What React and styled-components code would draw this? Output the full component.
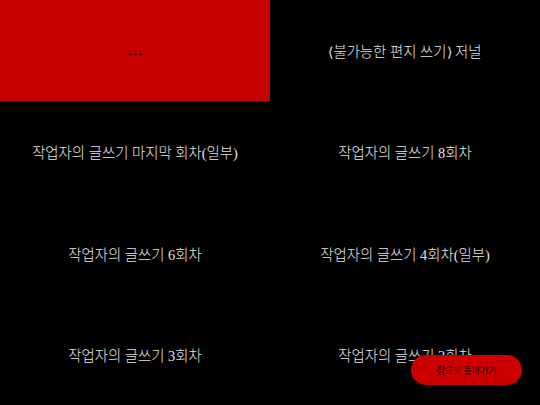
import React from "react";
import styled, { createGlobalStyle } from "styled-components";

const Global = createGlobalStyle`
  html, body { margin: 0; padding: 0; background: #000; }
  body { font-family: "Liberation Serif", "Noto Sans CJK KR", serif; }
`;

const Grid = styled.div`
  display: grid;
  grid-template-columns: 1fr 1fr;
  grid-template-rows: repeat(4, 101.25px);
  width: 540px;
  height: 405px;
  background: #000;
`;

const Cell = styled.a`
  display: flex;
  align-items: center;
  justify-content: center;
  padding-top: ${(p) => (p.$active ? "6px" : "0")};
  background: ${(p) => (p.$active ? "#c60000" : "#000")};
  color: ${(p) => (p.$active ? "#3a0000" : "#e4e4e4")};
  font-size: ${(p) => (p.$active ? "9px" : "14.4px")};
  font-weight: ${(p) => (p.$active ? "bold" : "300")};
  text-decoration: none;
  cursor: pointer;
`;

const HomeButton = styled.button`
  position: fixed;
  right: 18px;
  bottom: 20px;
  width: 111px;
  height: 30px;
  border: none;
  border-radius: 15px;
  background: #cc0000;
  color: #4a0000;
  font-family: "Noto Sans CJK KR", sans-serif;
  font-size: 9px;
  font-weight: 500;
  cursor: pointer;
`;

const items = [
  "+++",
  "⟨불가능한 편지 쓰기⟩ 저널",
  "작업자의 글쓰기 마지막 회차(일부)",
  "작업자의 글쓰기 8회차",
  "작업자의 글쓰기 6회차",
  "작업자의 글쓰기 4회차(일부)",
  "작업자의 글쓰기 3회차",
  "작업자의 글쓰기 2회차",
];

export default function App() {
  return (
    <>
      <Global />
      <Grid>
        {items.map((t, i) => (
          <Cell key={i} $active={i === 0}>
            {t}
          </Cell>
        ))}
      </Grid>
      <HomeButton>집으로 돌아가기</HomeButton>
    </>
  );
}
